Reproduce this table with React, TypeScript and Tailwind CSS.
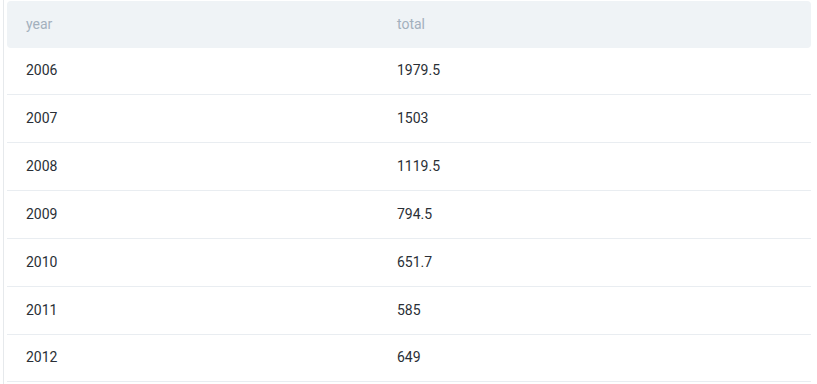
import React from "react";

const rows: [string, string][] = [
  ["2006", "1979.5"],
  ["2007", "1503"],
  ["2008", "1119.5"],
  ["2009", "794.5"],
  ["2010", "651.7"],
  ["2011", "585"],
  ["2012", "649"],
];

export default function App() {
  return (
    <div className="w-[817px] h-[384px] bg-white overflow-hidden flex" style={{ fontFamily: "Roboto, 'Liberation Sans', sans-serif" }}>
      <div className="w-[3px] shrink-0" />
      <div className="w-[1px] shrink-0 bg-[#e6e9ec]" />
      <div className="w-[3px] shrink-0" />
      <div className="w-[804px] pt-[1px]">
        <div className="flex h-[46.5px] items-center bg-[#eff3f6] rounded-[4px] text-[14px] text-[#a3b0bd]">
          <div className="w-[390px] pl-[19px]">year</div>
          <div className="flex-1">total</div>
        </div>
        {rows.map(([y, t]) => (
          <div key={y} className="flex h-[47.85px] items-center border-b border-[#e9edf1] text-[14px] text-[#2a2f36]">
            <div className="w-[390px] pl-[19px]">{y}</div>
            <div className="flex-1">{t}</div>
          </div>
        ))}
      </div>
    </div>
  );
}
